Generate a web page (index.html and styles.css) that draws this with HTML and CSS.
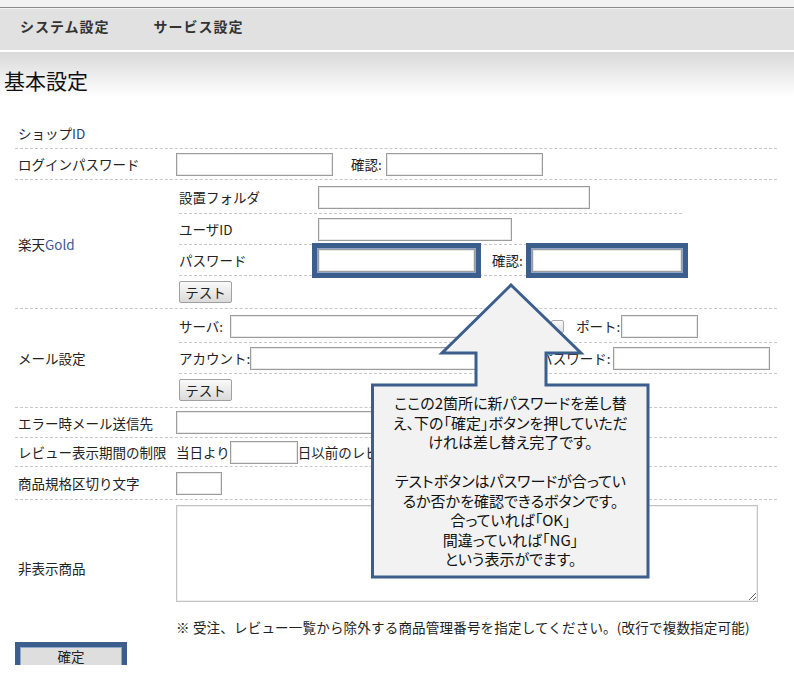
FILE: index.html
```html
<!DOCTYPE html>
<html lang="ja">
<head>
<meta charset="utf-8">
<title>基本設定</title>
<link rel="stylesheet" href="styles.css">
</head>
<body>
<div class="topstrip"></div>
<nav class="nav">
  <span class="nav-item">システム設定</span>
  <span class="nav-item">サービス設定</span>
</nav>
<header class="titlebar"><h1 class="title">基本設定</h1></header>

<main class="settings">
  <div class="row row-shop">
    <div class="label">ショップ<span class="latin-id">ID</span></div>
    <div class="value"></div>
  </div>

  <div class="row">
    <div class="label">ログインパスワード</div>
    <div class="value">
      <input class="inp w157" type="password">
      <span class="confirm">確認:</span>
      <input class="inp w157" type="password">
    </div>
  </div>

  <div class="row">
    <div class="label">楽天<span class="latin-gold">Gold</span></div>
    <div class="value sub">
      <div class="subgrid">
        <div class="subrow subrow-first"><span class="sublabel">設置フォルダ</span><input class="inp w272" type="text"></div>
        <div class="subrow"><span class="sublabel">ユーザID</span><input class="inp w194" type="text"></div>
        <div class="subrow"><span class="sublabel">パスワード</span><input class="inp w157 hl" type="password"><span class="confirm2">確認:</span><input class="inp w150 hl" type="password"></div>
        <div class="subrow subrow-last"><button class="btn">テスト</button></div>
      </div>
    </div>
  </div>

  <div class="row">
    <div class="label">メール設定</div>
    <div class="value sub">
      <div class="mailgrid">
        <div class="subrow subrow-first"><span>サーバ:</span><input class="inp w314 ml7" type="text"><input class="check" type="checkbox"><span class="port">ポート:</span><input class="inp w77 ml1" type="text"></div>
        <div class="subrow"><span>アカウント:</span><input class="inp w284" type="text"><span class="mpass">パスワード:</span><input class="inp w157 ml2" type="password"></div>
        <div class="subrow subrow-last subrow-test"><button class="btn">テスト</button></div>
      </div>
    </div>
  </div>

  <div class="row row-err">
    <div class="label">エラー時メール送信先</div>
    <div class="value"><input class="inp w290" type="text"></div>
  </div>

  <div class="row row-review">
    <div class="label">レビュー表示期間の制限</div>
    <div class="value"><span>当日より</span><input class="inp w68" type="text"><span>日以前のレビューを表示しない</span></div>
  </div>

  <div class="row row-tall">
    <div class="label">商品規格区切り文字</div>
    <div class="value"><input class="inp w46" type="text"></div>
  </div>

  <div class="row row-last">
    <div class="label">非表示商品</div>
    <div class="value stack">
      <textarea class="area"></textarea>
      <p class="note">※ 受注、レビュー一覧から除外する商品管理番号を指定してください。(改行で複数指定可能)</p>
    </div>
  </div>
</main>

<div class="submit-row"><button class="submit">確定</button></div>

<div class="callout">
  <svg class="callout-shape" width="279" height="296" viewBox="0 0 279 296">
    <polygon points="140,2 210,70 175,70 175,102 277,102 277,294 1.5,294 1.5,102 105,102 105,70 71,70" fill="#f2f2f2" stroke="#3b5e8c" stroke-width="3" stroke-linejoin="miter"/>
  </svg>
  <div class="callout-text">ここの2箇所に新パスワードを差し替<br>え、下の「確定」ボタンを押していただ<br>けれは差し替え完了です。<br><br>テストボタンはパスワードが合ってい<br>るか否かを確認できるボタンです。<br>合っていれば「OK」<br>間違っていれば「NG」<br>という表示がでます。</div>
</div>
</body>
</html>
```

FILE: styles.css
```css
html, body {
  margin: 0;
  padding: 0;
}
body {
  position: relative;
  font-family: "Noto Sans CJK JP", "Noto Sans", sans-serif;
  font-size: 13.5px;
  color: #222;
  background: #fff;
}

.topstrip {
  height: 7px;
  background: #f3f3f3;
  border-bottom: 1px solid #8c8c8c;
}

.nav {
  display: flex;
  gap: 44px;
  height: 41px;
  padding-left: 20px;
  background: #e1e1e1;
  border-top: 1px solid #f4f4f4;
  border-bottom: 2px solid #fff;
}
.nav-item {
  font-size: 14px;
  font-weight: bold;
  letter-spacing: 1px;
  color: #333;
  line-height: 20px;
  padding-top: 7px;
}

.titlebar {
  height: 66px;
  background: linear-gradient(#d9d9d9, #fff 45px);
}
.title {
  margin: 0;
  padding: 16px 0 0 4px;
  font-size: 21px;
  font-weight: normal;
  line-height: 24px;
  color: #111;
}

.settings {
  margin: 0 0 0 15px;
  width: 762px;
}
.row {
  display: grid;
  grid-template-columns: 161px 1fr;
  align-items: center;
  min-height: 30px;
  border-bottom: 1px dashed #c8c8c8;
}
.row-err { min-height: 29px; }
.row-review { min-height: 28px; }
.row-tall { min-height: 32px; }
.row-last { border-bottom: none; }
.label {
  padding-left: 3px;
  white-space: nowrap;
}
.latin-id { color: #2e3c7c; }
.latin-gold { color: #3d5a96; }
.value {
  display: flex;
  align-items: center;
  white-space: nowrap;
}
.sub {
  display: block;
  padding: 1px 0 1px 3px;
}
.stack {
  display: block;
  padding-top: 5px;
}

.inp {
  box-sizing: border-box;
  height: 23px;
  margin: 0;
  padding: 0 3px;
  border: 1px solid #9c9c9c;
  box-shadow: inset 0 0 0 1px #e8e8e8;
  background: #fff;
  font: inherit;
}
.w46 { width: 46px; }
.w68 { width: 68px; }
.w77 { width: 77px; }
.w150 { width: 150px; }
.w157 { width: 157px; }
.w194 { width: 194px; }
.w272 { width: 272px; }
.w284 { width: 284px; }
.w290 { width: 290px; }
.w314 { width: 314px; }
.ml1 { margin-left: 1px; }
.ml2 { margin-left: 2px; }
.ml7 { margin-left: 7px; }

.hl {
  box-shadow: inset 0 0 0 1px #e8e8e8, 0 0 0 1px #8fa7c9, 0 0 0 6px #3b5e8c;
}

.confirm { margin: 0 4px 0 18px; }
.confirm2 { margin: 0 9px 0 17px; }

.subgrid { width: max-content; }
.mailgrid { width: auto; }
.subrow {
  display: flex;
  align-items: center;
  height: 30px;
  border-bottom: 1px dashed #c8c8c8;
}
.subrow-first { height: 32px; }
.subrow-last {
  border-bottom: none;
  height: 31px;
}
.subrow-test { height: 32px; }
.sublabel { width: 139px; }

.check {
  appearance: none;
  -webkit-appearance: none;
  width: 13px;
  height: 13px;
  margin: 0 0 0 7px;
  border: 1px solid #a8a8a8;
  border-radius: 2px;
  background: linear-gradient(#fafafa, #dedede);
}
.port { margin-left: 12px; }
.mpass { margin-left: 5px; }

.btn {
  width: 53px;
  height: 22px;
  padding: 0;
  margin: 0;
  font: inherit;
  color: #222;
  border: 1px solid #a0a0a0;
  border-radius: 2px;
  background: linear-gradient(#fafafa, #dadada);
}

.area {
  display: block;
  box-sizing: border-box;
  width: 582px;
  height: 97px;
  margin: 0;
  border: 1px solid #c4c4c4;
  box-shadow: inset 0 0 0 1px #eee;
  resize: both;
  font: inherit;
}
.note {
  margin: 16px 0 0 0;
  line-height: 18px;
  letter-spacing: 0.2px;
}

.submit-row {
  padding: 12px 0 0 21px;
}
.submit {
  display: block;
  width: 100px;
  height: 17px;
  padding: 0;
  margin: 0;
  font: inherit;
  line-height: 15px;
  color: #222;
  border: none;
  background: #dedede;
  box-shadow: 0 0 0 1px #8fa7c9, 0 0 0 6px #3b5e8c;
}

.callout {
  position: absolute;
  left: 371px;
  top: 283px;
  width: 279px;
  height: 296px;
}
.callout-shape {
  position: absolute;
  left: 0;
  top: 0;
}
.callout-text {
  position: absolute;
  top: 110px;
  left: 0;
  width: 100%;
  text-align: center;
  font-size: 15px;
  line-height: 19.5px;
  font-feature-settings: "palt";
  white-space: nowrap;
  color: #111;
}
```
